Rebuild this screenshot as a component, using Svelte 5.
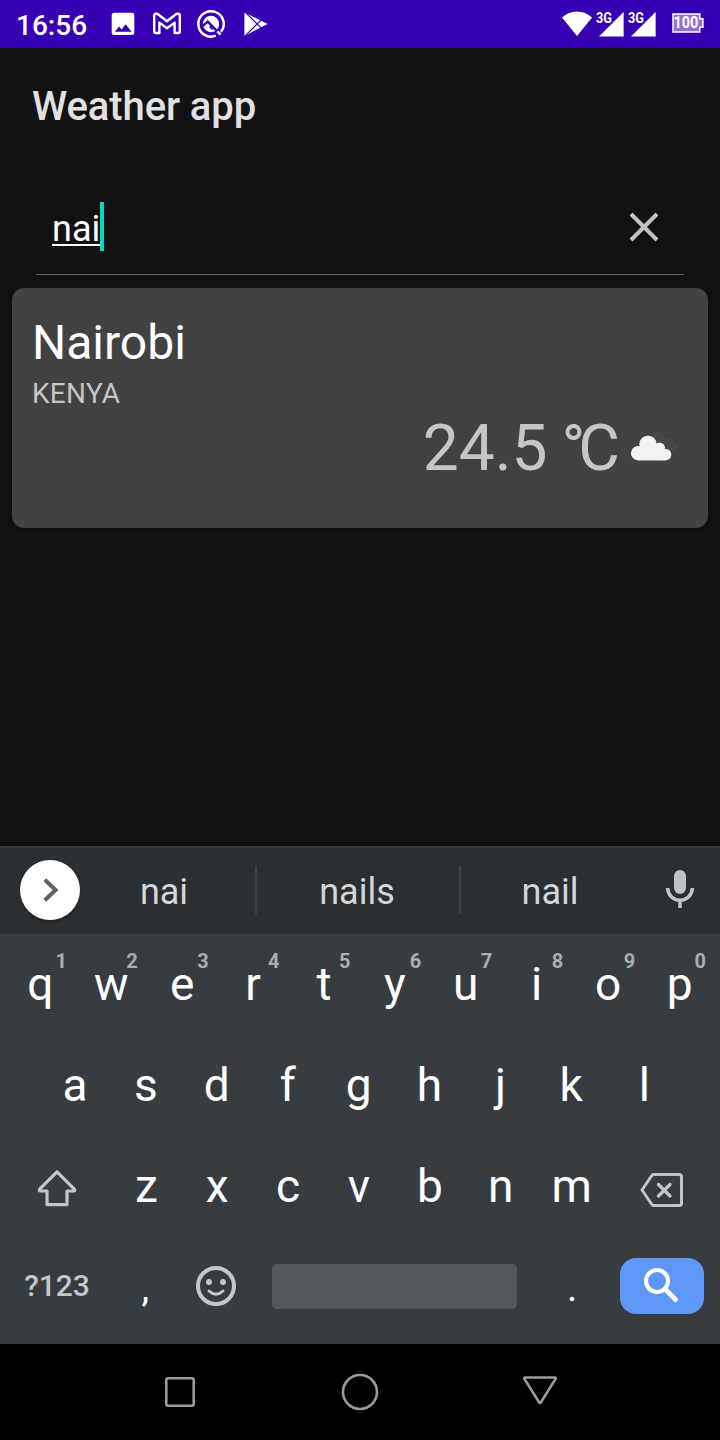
<script>
  const query = 'nai';
  const suggestions = ['nai', 'nails', 'nail'];
  const topRow = [...'qwertyuiop'].map((letter, i) => ({ letter, hint: (i + 1) % 10 }));
  const middleRow = [...'asdfghjkl'];
  const bottomRow = [...'zxcvbnm'];
</script>

<div class="screen">
  <header class="status">
    <span class="time">16:56</span>
    <div class="notifications">
      <svg width="28" height="28" viewBox="0 0 28 28">
        <rect x="2.7" y="2.7" width="22.6" height="22.4" rx="2.4" fill="#fff" />
        <path d="M5.8 21.8 10 16.4l2.7 3.2 3.9-5.4 6 7.6z" fill="#3700b3" />
      </svg>
      <svg width="28" height="28" viewBox="0 0 28 28" fill="none" stroke="#fff" stroke-width="2.4" stroke-linejoin="round">
        <path d="M1.2 5.4Q1.2 3.8 3 3.8H4.4L14 11.3 23.6 3.8H25Q26.8 3.8 26.8 5.4V21.6Q26.8 23 25.4 23H21.6V12.6L14 18.2 6.4 12.6V23H2.6Q1.2 23 1.2 21.6Z" />
      </svg>
      <svg width="28" height="28" viewBox="0 0 28 28" fill="none">
        <path d="M18.8 25.7A12.7 12.7 0 1 1 24 21.8" stroke="#fff" stroke-width="2.5" />
        <circle cx="14" cy="14" r="8.2" fill="#fff" />
        <path d="M5 16.5 10.8 11.6 22.5 23.6" stroke="#3700b3" stroke-width="2.4" />
        <path d="M12.600 16.400 15.600 19.400" stroke="#3700b3" stroke-width="1.600" />
        <path d="M20.400 21.400l3.200 3.200" stroke="#fff" stroke-width="2.6" />
      </svg>
      <svg width="28" height="28" viewBox="0 0 28 28">
        <path d="M3.4 2.2 20 10.7 25.8 13.5Q26.6 14 25.8 14.5L20 17.3 3.4 26Z" fill="#fff" />
        <path d="M3.6 1.6 20.8 18.6M3.6 26.4 20.8 9.4" stroke="#3700b3" stroke-width="1.2" />
      </svg>
    </div>
    <div class="system">
      <svg width="30" height="28" viewBox="0 0 30 28">
        <path d="M0 7.4Q6.5 1.4 15 1.4T30 7.4L15 26Z" fill="#fff" />
      </svg>
      {#each [0, 1] as sim (sim)}
        <svg class="signal" width="28" height="28" viewBox="0 0 28 28">
          <path d="M3 26.4 27.6 2V26.4Z" fill="#fff" />
          <text x="0" y="13" textLength="16" lengthAdjust="spacingAndGlyphs">3G</text>
        </svg>
      {/each}
      <svg class="battery" width="32" height="28" viewBox="0 0 32 28">
        <path d="M1 3.9H27.800V8.7H30.900V17.2H27.800V22.100H1Z" fill="#9270d6" stroke="#fff" stroke-width="1.5" />
        <text x="1.6" y="17.9" textLength="24.800" lengthAdjust="spacingAndGlyphs">100</text>
      </svg>
    </div>
  </header>

  <main>
    <h1>Weather app</h1>
    <div class="search">
      <span class="query">{query}</span><span class="caret"></span>
      <svg class="clear" width="32" height="32" viewBox="0 0 32 32">
        <path d="M3 3 29 29M29 3 3 29" stroke="#c3c3c3" stroke-width="3.9" />
      </svg>
    </div>
    <section class="card">
      <h2>Nairobi</h2>
      <p class="country">KENYA</p>
      <div class="reading">
        <span>24.5 <span class="unit">°C</span></span>
        <svg width="50" height="34" viewBox="0 0 50 34">
          <g fill="#48484a">
            <circle cx="27.7" cy="7.1" r="7.3" />
            <circle cx="38.600" cy="10.400" r="5.200" />
            <circle cx="43" cy="15.400" r="5" />
            <path d="M22 8H38L44 20.400H24Z" />
          </g>
          <g class="cloud">
            <circle cx="8.200" cy="21.200" r="7.300" />
            <circle cx="18" cy="12.200" r="8.700" />
            <circle cx="29.600" cy="15.800" r="5.400" />
            <circle cx="35.500" cy="22.600" r="5.900" />
            <path d="M8.200 28.500V16L12 12H26L31 16 35.500 20V28.500Z" />
          </g>
          <g fill="#f2f2f0">
            <circle cx="8.200" cy="21.200" r="7.300" />
            <circle cx="18" cy="12.200" r="8.700" />
            <circle cx="29.600" cy="15.800" r="5.400" />
            <circle cx="35.500" cy="22.600" r="5.900" />
            <path d="M8.200 28.500V16L12 12H26L31 16 35.500 20V28.500Z" />
          </g>
        </svg>
      </div>
    </section>
  </main>

  <div class="suggestions">
    <div class="expand">
      <svg width="60" height="60" viewBox="0 0 60 60">
        <path d="M24.800 19.800 35.600 30 24.800 40.200" fill="none" stroke="#616161" stroke-width="4" />
      </svg>
    </div>
    {#each suggestions as word (word)}
      <span class="word">{word}</span>
    {/each}
    <div class="mic">
      <svg width="32" height="42" viewBox="0 0 32 42">
        <rect x="10" y="1" width="12" height="24" rx="6" fill="#c2c3c5" />
        <path d="M3.700 19A12.300 12.300 0 0 0 28.300 19M16 31V39" fill="none" stroke="#c2c3c5" stroke-width="3.600" />
      </svg>
    </div>
  </div>

  <div class="keyboard">
    <div class="row top">
      {#each topRow as key (key.letter)}
        <span class="key">{key.letter}<small>{key.hint}</small></span>
      {/each}
    </div>
    <div class="row middle">
      {#each middleRow as letter (letter)}<span class="key">{letter}</span>{/each}
    </div>
    <div class="row">
      <span class="key wide shift">
        <svg width="42" height="40" viewBox="0 0 42 40" fill="none" stroke="#c4c6c7" stroke-width="3.200" stroke-linejoin="round">
          <path d="M21 2.800 38.300 20.200Q39.400 22 37.600 22H31V35.600H11V22H4.400Q2.600 22 3.700 20.200Z" />
        </svg>
      </span>
      {#each bottomRow as letter (letter)}<span class="key">{letter}</span>{/each}
      <span class="key wide erase">
        <svg width="46" height="38" viewBox="0 0 46 38" fill="none" stroke="#c4c6c7" stroke-width="3" stroke-linejoin="round">
          <path d="M14.500 3.500H40Q42.500 3.500 42.500 6V32Q42.500 34.500 40 34.500H14.500Q13.500 34.500 12.500 33L3 19 12.500 5Q13.500 3.500 14.500 3.500Z" />
          <path d="M19.500 13.500 31 25M31 13.500 19.500 25" stroke-width="3.300" stroke-linecap="round" />
        </svg>
      </span>
    </div>
    <div class="row last">
      <span class="key wide symbols">?123</span>
      <span class="key punct">,</span>
      <span class="key emoji">
        <svg width="42" height="42" viewBox="0 0 42 42" fill="none" stroke="#c4c6c7">
          <circle cx="21" cy="21" r="18" stroke-width="4" />
          <circle cx="14" cy="17" r="3" fill="#c4c6c7" stroke="none" />
          <circle cx="28" cy="17" r="3" fill="#c4c6c7" stroke="none" />
          <path d="M14 26Q21 32.500 28 26" stroke-width="3" stroke-linecap="round" />
        </svg>
      </span>
      <span class="space"></span>
      <span class="key punct">.</span>
      <span class="go">
        <svg width="36" height="36" viewBox="0 0 36 36" fill="none" stroke="#fff">
          <circle cx="13" cy="13" r="11" stroke-width="4" />
          <path d="M21.500 21.500 33 33" stroke-width="4.600" />
        </svg>
      </span>
    </div>
  </div>

  <nav>
    <svg width="40" height="40" viewBox="0 0 40 40"><rect x="6.300" y="6.300" width="27.400" height="27.400" rx="2" /></svg>
    <svg width="40" height="40" viewBox="0 0 40 40"><circle cx="20" cy="20" r="17" /></svg>
    <svg width="40" height="40" viewBox="0 0 40 40"><path d="M5 5.500H35Q36 5.500 35.500 7L20.800 30.500Q20 31.500 19.200 30.500L4.500 7Q4 5.500 5 5.500Z" /></svg>
  </nav>
</div>

<style>
  :global(body) { margin: 0; background: #121212; }
  .screen {
    display: flex;
    flex-direction: column;
    width: 720px;
    height: 1440px;
    overflow: hidden;
    background: #121212;
    color: #fff;
    font-family: Roboto, 'Noto Sans', sans-serif;
  }
  svg { display: block; flex: none; }

  .status {
    display: flex;
    align-items: center;
    box-sizing: border-box;
    height: 48px;
    padding: 0 16px;
    background: #3700b3;
  }
  .time { width: 93px; font-size: 28px; font-weight: 500; line-height: 46px; padding-top: 3px; }
  .notifications { display: flex; gap: 16px; }
  .system { display: flex; margin-left: auto; }
  .signal { margin-left: 4px; }
  .signal text {
    font-size: 15px;
    font-weight: 700;
    fill: #fff;
    stroke: #3700b3;
    stroke-width: 2px;
    paint-order: stroke;
  }
  .battery { margin-left: 16px; }
  .battery text { font-size: 16px; font-weight: 700; fill: #fff; }

  main { flex: 1; padding: 0 12px; }
  h1, h2, p { margin: 0; font-weight: 400; }
  h1 {
    padding: 35px 0 0 20px;
    font-size: 40px;
    font-weight: 500;
    line-height: 48px;
    letter-spacing: -.1px;
    color: #e1e1e1;
  }
  .search {
    display: flex;
    align-items: center;
    box-sizing: border-box;
    height: 98px;
    margin: 46px 24px 0;
    padding: 3px 24px 0 16px;
    border-bottom: 1px solid #616161;
  }
  .query {
    font-size: 36px;
    line-height: 42px;
    padding-top: 4px;
    text-decoration: underline;
    text-decoration-thickness: 2px;
    text-underline-offset: 3px;
    text-decoration-skip-ink: none;
  }
  .caret { width: 4px; height: 49px; margin-bottom: 2px; background: #03dac5; }
  .clear { margin-left: auto; }
  .card {
    box-sizing: border-box;
    height: 240px;
    margin-top: 13px;
    padding: 27px 28px 0 20px;
    border-radius: 12px;
    background: #424242;
    box-shadow: 0 2px 4px rgba(0, 0, 0, .35);
  }
  h2 { font-size: 48px; line-height: 56px; }
  .country { padding-top: 6px; font-size: 28px; line-height: 34px; letter-spacing: .3px; color: #c6c6c6; }
  .reading {
    display: flex;
    justify-content: flex-end;
    align-items: center;
    font-size: 64px;
    line-height: 76px;
    color: #c6c6c6;
  }
  .unit { margin-left: -2px; letter-spacing: -7px; }
  .reading svg { margin-left: 17px; }
  .cloud { fill: #303032; stroke: #303032; stroke-width: 1; }

  .suggestions {
    display: flex;
    align-items: center;
    box-sizing: border-box;
    height: 88px;
    padding-bottom: 2px;
    border-top: 2px solid #363b3f;
    background: #2a2f33;
  }
  .expand { width: 73px; padding-left: 20px; box-sizing: border-box; }
  .expand svg { border-radius: 50%; background: #fff; box-shadow: 0 2px 3px rgba(0, 0, 0, .3); }
  .word {
    box-sizing: border-box;
    width: 184px;
    height: 48px;
    border-right: 2px solid #3e4347;
    font-size: 36px;
    line-height: 53px;
    text-align: center;
    color: #d4d5d6;
  }
  .word:nth-of-type(2) { width: 204px; padding-right: 2px; }
  .word:nth-of-type(3) { width: 179px; padding-right: 1px; border: 0; }
  .mic { display: flex; flex: 1; justify-content: center; }

  .keyboard { box-sizing: border-box; height: 410px; padding: 0 4px; background: #373c40; }
  .row { display: flex; align-items: center; height: 101px; }
  .row.last { height: 98px; }
  .key {
    position: relative;
    display: flex;
    flex: none;
    justify-content: center;
    width: 70.9px;
    font-size: 46px;
    line-height: 101px;
  }
  .top { padding-left: 1px; }
  .top .key:nth-child(9) { width: 72px; }
  .middle { padding-left: 35.6px; }
  .middle .key:last-child { width: 75px; }
  .wide { width: 106.9px; }
  .shift { padding-top: 4px; }
  .erase { width: 109px; padding-top: 6px; }
  .key small {
    position: absolute;
    top: 14px;
    right: 9px;
    font-size: 20px;
    font-weight: 700;
    line-height: 26px;
    color: #abadaf;
  }
  .symbols { width: 106px; font-size: 30px; font-weight: 500; line-height: 100px; color: #c4c6c7; }
  .punct { font-size: 39px; padding-top: 4px; }
  .emoji { width: 70.7px; }
  .space { flex: none; width: 245px; height: 45px; margin: 0 20px; border-radius: 5px; background: #55595d; }
  .go {
    display: flex;
    justify-content: center;
    align-items: center;
    width: 84px;
    height: 56px;
    margin-left: auto;
    margin-right: 12px;
    border-radius: 16px;
    background: #5e97f6;
  }

  nav {
    display: flex;
    justify-content: space-between;
    align-items: center;
    box-sizing: border-box;
    height: 96px;
    padding: 0 160px;
    background: #000;
  }
  nav svg { fill: none; stroke: #9b9b9b; stroke-width: 2.6; }
</style>
